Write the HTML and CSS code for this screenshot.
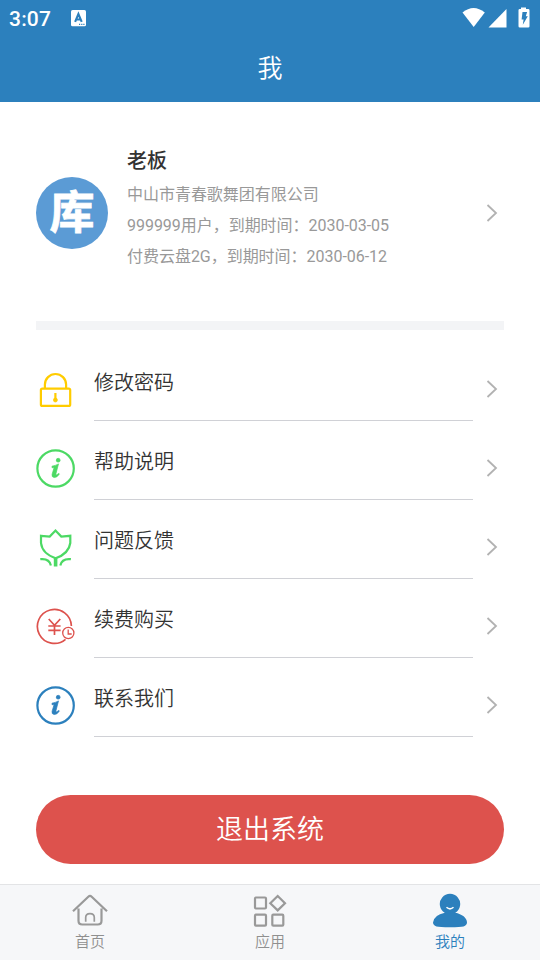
FILE: index.html
```html
<!DOCTYPE html>
<html lang="zh-CN">
<head>
<meta charset="utf-8">
<title>我</title>
<link rel="stylesheet" href="styles.css">
</head>
<body>
<div class="app">
  <header class="header">
    <div class="status">
      <span class="time">3:07</span>
      <svg class="ime" width="15" height="17" viewBox="0 0 15 17"><rect width="15" height="16.3" rx="1.6" fill="#fff"/><path d="M4.1 11.800 7.400 4 10.700 11.800M5.500 9.500h3.800" fill="none" stroke="#2c80bd" stroke-width="2.100"/><path d="M8 14.400h1.200M10.200 14.400h1.200M12.300 14.400h1.200" stroke="#2c80bd" stroke-width="1.200"/></svg>
      <svg class="signals" width="68" height="22" viewBox="0 0 68 22" fill="#fff"><path d="M0.500 5.500Q11.500-3.500 22.800 5.500L11.700 20Z"/><path d="M44.500 2v18.500H26.500Z"/><path d="M59 2V.5h5V2h2.200q1.300 0 1.300 1.300v15.900q0 1.300-1.300 1.300h-8.400q-1.300 0-1.300-1.300V3.300Q56.500 2 57.800 2Z"/><path d="M60.500 5h4.600l-1.300 4.300h2L60.800 17.800l.8-5.300h-2Z" fill="#2c80bd"/></svg>
    </div>
    <h1 class="title">我</h1>
  </header>

  <main class="main">
    <section class="profile">
      <div class="avatar"><span>库</span></div>
      <div class="info">
        <h2>老板</h2>
        <p>中山市青春歌舞团有限公司</p>
        <p>999999用户，到期时间：2030-03-05</p>
        <p>付费云盘2G，到期时间：2030-06-12</p>
      </div>
      <svg class="chevron" width="12" height="18" viewBox="0 0 12 18"><path d="M1.500 1 10 9 1.500 17"/></svg>
    </section>
    <div class="divider"></div>
    <nav class="menu">
      <a class="row">
        <svg class="icon yellow" width="40" height="40" viewBox="0 0 40 40"><rect x="4.900" y="18.600" width="29.300" height="17.300" rx="1.500"/><path d="M8.900 18.600v-4a10.600 10.600 0 0 1 21.200 0v4M19.400 23v6"/><circle class="solid" cx="19.400" cy="30" r="2"/></svg>
        <span class="label">修改密码</span>
        <svg class="chevron" width="12" height="18" viewBox="0 0 12 18"><path d="M1.500 1 10 9 1.500 17"/></svg>
      </a>
      <a class="row">
        <svg class="icon green" width="40" height="40" viewBox="0 0 40 40"><circle cx="19.600" cy="19.500" r="18.200"/><circle class="solid" cx="22.200" cy="11.200" r="1.900"/><path class="solid" d="M16 17.200q3.800-.7 6.500-2.300L20 24.500q-.5 1.900.8 1.300l2-1.400.6.800q-2.500 3.300-5 3.300-3-.2-2.300-3.300l2-6.600-2.100.1Z"/></svg>
        <span class="label">帮助说明</span>
        <svg class="chevron" width="12" height="18" viewBox="0 0 12 18"><path d="M1.500 1 10 9 1.500 17"/></svg>
      </a>
      <a class="row">
        <svg class="icon green" width="40" height="40" viewBox="0 0 40 40"><path d="M5 7.800 13.700 8.600 19.500 2.500 25.300 8.600 34.300 7.800V15Q33 25.500 19.600 30.300 6.200 25.500 5 15Z"/><path d="M4.300 31.200q9-1 10.600 6.300M34.900 31.200q-9-1-10.600 6.300"/><path stroke-width="3.600" d="M19.600 30v8.500"/></svg>
        <span class="label">问题反馈</span>
        <svg class="chevron" width="12" height="18" viewBox="0 0 12 18"><path d="M1.500 1 10 9 1.500 17"/></svg>
      </a>
      <a class="row">
        <svg class="icon red" width="40" height="40" viewBox="0 0 40 40"><path d="M35.400 19A17 17 0 1 0 29.500 32.300M12.700 12l5.800 6.300 5.800-6.300M12.300 19h12.300M12.300 23.300h12.300M18.500 18.300v9.700"/><circle cx="32.300" cy="26" r="5.600" stroke-width="1.300"/><path stroke-width="1.300" d="M32.200 22.500v4.500h3.500"/></svg>
        <span class="label">续费购买</span>
        <svg class="chevron" width="12" height="18" viewBox="0 0 12 18"><path d="M1.500 1 10 9 1.500 17"/></svg>
      </a>
      <a class="row">
        <svg class="icon blue" width="40" height="40" viewBox="0 0 40 40"><circle cx="19.600" cy="19.500" r="18.200"/><circle class="solid" cx="22.200" cy="11.200" r="1.900"/><path class="solid" d="M16 17.200q3.800-.7 6.500-2.300L20 24.500q-.5 1.900.8 1.300l2-1.400.6.800q-2.500 3.300-5 3.300-3-.2-2.300-3.300l2-6.600-2.100.1Z"/></svg>
        <span class="label">联系我们</span>
        <svg class="chevron" width="12" height="18" viewBox="0 0 12 18"><path d="M1.500 1 10 9 1.500 17"/></svg>
      </a>
    </nav>
    <button class="logout">退出系统</button>
  </main>

  <footer class="tabs">
    <a class="tab">
      <svg width="38" height="36" viewBox="0 0 38 36"><path d="M2 19.300 17.300 4.700q1.700-1.500 3.400 0L36 19.300M7.500 16.500v12.200q0 3.800 3.800 3.800h15.400q3.800 0 3.800-3.800V16.500"/><path stroke-width="1.700" d="M14.700 29.800v-4.200q0-4 4.300-4t4.300 4v4.200"/></svg>
      <span>首页</span>
    </a>
    <a class="tab">
      <svg width="38" height="36" viewBox="0 0 38 36"><rect x="4" y="5.500" width="11" height="11" rx="1"/><rect x="4" y="22.700" width="11" height="11" rx="1"/><rect x="21.300" y="22.700" width="11" height="11" rx="1"/><path d="M26.700 4 34 11.200 26.700 18.400 19.300 11.200Z"/></svg>
      <span>应用</span>
    </a>
    <a class="tab active">
      <svg width="38" height="36" viewBox="0 0 38 36"><path class="person" d="M13.800 20.800A10.200 10.200 0 1 1 24.200 20.800C31 22 36 26 36 30.500q0 2.500-3.500 4-3 .8-13.500.8t-13.500-.8Q2 33 2 30.500 3 23 13.800 20.800Z"/><path class="smile" d="M15.500 15.300q3.500 3.200 7 0"/></svg>
      <span>我的</span>
    </a>
  </footer>
</div>
</body>
</html>
```
FILE: styles.css
```css
* { box-sizing: border-box; }
body {
  margin: 0;
  background: #fff;
  color: #333;
  font-family: Roboto, "Noto Sans CJK SC", sans-serif;
}
h1, h2, p { margin: 0; font-weight: 400; }
.app { width: 540px; height: 960px; display: flex; flex-direction: column; overflow: hidden; }

.header { height: 102px; background: #2c80bd; color: #fff; }
.status { height: 36px; display: flex; align-items: center; padding: 0 10px 0 9px; }
.time { font-size: 21px; font-weight: 500; line-height: 36px; width: 62px; padding-top: 2px; letter-spacing: 0.2px; }
.ime { margin-top: 1px; }
.signals { margin-left: auto; }
.title { font-size: 25px; line-height: 66px; font-weight: 350; text-align: center; }

.main { flex: 1; padding: 0 36px; display: flex; flex-direction: column; }
.profile { height: 219px; display: flex; align-items: center; padding: 3px 6px 0 0; }
.avatar {
  width: 72px; height: 72px; border-radius: 50%; background: #5b9bd5; color: #fff;
  display: flex; align-items: center; justify-content: center; flex: none;
  font-size: 45px; font-weight: 700; line-height: 1; -webkit-text-stroke: 0.8px #fff;
}
.info { flex: 1; margin-left: 19px; padding-bottom: 12px; }
.info h2 { font-size: 20px; line-height: 36px; font-weight: 500; }
.info p { font-size: 16px; line-height: 31px; color: #999; white-space: nowrap; letter-spacing: -0.03px; }
.chevron { flex: none; fill: none; stroke: #b2b2b2; stroke-width: 1.8; }
.divider { height: 9px; background: #f3f4f6; }

.menu { padding-top: 12px; }
.row { height: 79px; display: flex; align-items: center; padding-right: 6px; }
.icon { flex: none; margin-top: 16px; fill: none; stroke: currentColor; stroke-width: 2.2; }
.icon .solid { fill: currentColor; stroke-width: .7; }
.yellow { color: #ffcc00; }
.green { color: #4cd964; }
.red { color: #dd524d; stroke-width: 1.7; }
.blue { color: #2c80bd; }
.label {
  width: 379px; height: 79px; margin-left: 18px; border-bottom: 1px solid #d0d1d6;
  font-size: 20px; line-height: 82px; font-weight: 350;
}
.row .chevron { margin: 15px 0 0 auto; }

.logout {
  height: 69px; margin-top: 58px; padding: 0 0 4px; border: 0; border-radius: 35px;
  background: #dd524d; color: #fff; font: inherit; font-size: 27px; font-weight: 350;
}

.tabs { height: 76px; display: flex; background: #f6f7f9; border-top: 1px solid #e3e4e6; }
.tab { flex: 1; display: flex; flex-direction: column; align-items: center; padding-top: 7px; color: #8f8f8f; font-size: 15px; line-height: 28px; font-weight: 350; }
.tab svg { fill: none; stroke: #999; stroke-width: 2.2; }
.tab.active { color: #2c80bd; }
.tab .person { fill: currentColor; stroke: none; }
.tab .smile { stroke: #fff; stroke-width: 1.5; }
```
